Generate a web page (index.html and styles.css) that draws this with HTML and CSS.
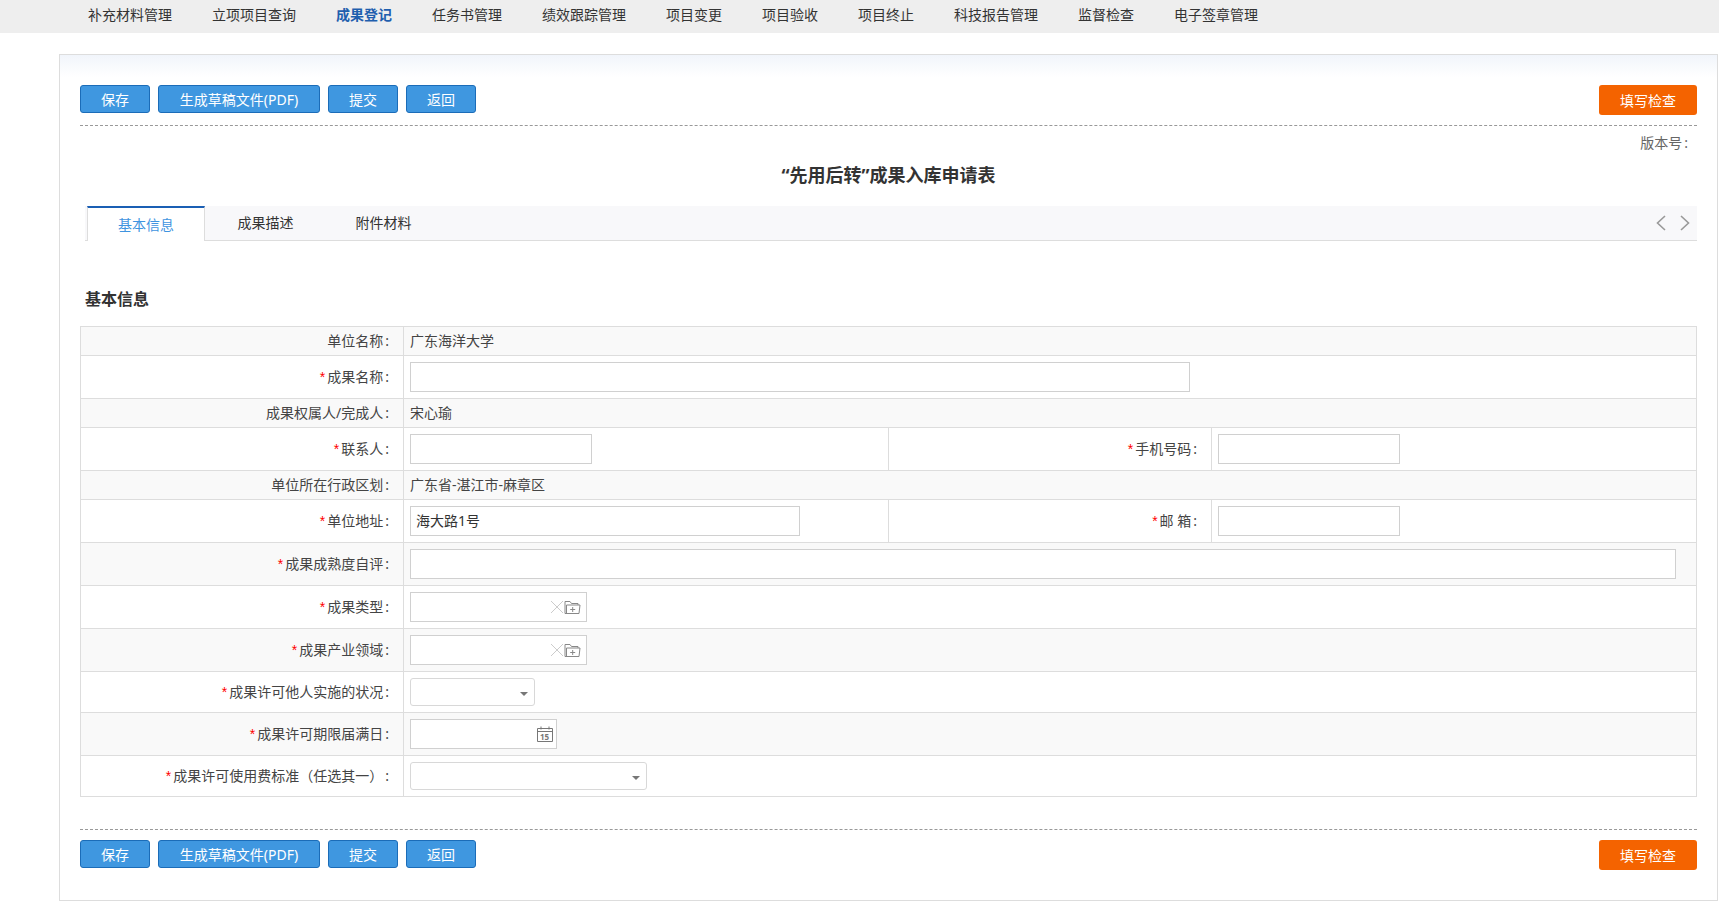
FILE: index.html
```html
<!DOCTYPE html>
<html lang="zh-CN">
<head>
  <meta charset="UTF-8">
  <title>成果入库申请表</title>
  <link rel="stylesheet" href="styles.css">
</head>
<body>
  <nav class="topnav">
    <a>补充材料管理</a>
    <a>立项项目查询</a>
    <a class="current">成果登记</a>
    <a>任务书管理</a>
    <a>绩效跟踪管理</a>
    <a>项目变更</a>
    <a>项目验收</a>
    <a>项目终止</a>
    <a>科技报告管理</a>
    <a>监督检查</a>
    <a>电子签章管理</a>
  </nav>

  <div class="panel">
    <div class="toolbar">
      <div class="btn-group">
        <button class="btn">保存</button>
        <button class="btn btn-wide">生成草稿文件(PDF)</button>
        <button class="btn">提交</button>
        <button class="btn">返回</button>
      </div>
      <button class="btn-check">填写检查</button>
    </div>

    <div class="version">版本号<span class="colon">:</span></div>
    <h1 class="form-title">“先用后转”成果入库申请表</h1>

    <div class="tabs">
      <a class="tab active">基本信息</a>
      <a class="tab">成果描述</a>
      <a class="tab">附件材料</a>
      <div class="tab-arrows">
        <svg width="12" height="16" viewBox="0 0 12 16"><path d="M10 1 L2.5 8 L10 15" /></svg>
        <svg width="12" height="16" viewBox="0 0 12 16"><path d="M2 1 L9.5 8 L2 15" /></svg>
      </div>
    </div>

    <h2 class="section-title">基本信息</h2>

    <table class="form-table">
      <colgroup>
        <col class="col-label"><col class="col-value"><col class="col-label"><col class="col-value">
      </colgroup>
      <tr class="row-s gray">
        <td class="label">单位名称<span class="colon">:</span></td>
        <td class="plain" colspan="3">广东海洋大学</td>
      </tr>
      <tr class="row-m">
        <td class="label"><i>*</i>成果名称<span class="colon">:</span></td>
        <td colspan="3"><input class="w-780" type="text"></td>
      </tr>
      <tr class="row-s gray">
        <td class="label">成果权属人/完成人<span class="colon">:</span></td>
        <td class="plain" colspan="3">宋心瑜</td>
      </tr>
      <tr class="row-m">
        <td class="label"><i>*</i>联系人<span class="colon">:</span></td>
        <td><input class="w-182" type="text"></td>
        <td class="label"><i>*</i>手机号码<span class="colon">:</span></td>
        <td><input class="w-182" type="text"></td>
      </tr>
      <tr class="row-s gray">
        <td class="label">单位所在行政区划<span class="colon">:</span></td>
        <td class="plain" colspan="3">广东省-湛江市-麻章区</td>
      </tr>
      <tr class="row-m">
        <td class="label"><i>*</i>单位地址<span class="colon">:</span></td>
        <td><input class="w-390" type="text" value="海大路1号"></td>
        <td class="label"><i>*</i>邮 箱<span class="colon">:</span></td>
        <td><input class="w-182" type="text"></td>
      </tr>
      <tr class="row-m gray">
        <td class="label"><i>*</i>成果成熟度自评<span class="colon">:</span></td>
        <td colspan="3"><input class="w-1266" type="text"></td>
      </tr>
      <tr class="row-m">
        <td class="label"><i>*</i>成果类型<span class="colon">:</span></td>
        <td colspan="3">
          <div class="picker">
            <input type="text">
            <svg class="ico-clear" width="14" height="14" viewBox="0 0 14 14"><path d="M1 1 L13 13 M13 1 L1 13" /></svg>
            <svg class="ico-folder" width="17" height="15" viewBox="0 0 17 15"><path d="M1 13.5 V1.5 H6 L7.5 3.5 H14 V5 M1 13.5 H15 L16 5 H2.5 V13.5 M8.7 7 V12 M6.2 9.5 H11.2" /></svg>
          </div>
        </td>
      </tr>
      <tr class="row-m gray">
        <td class="label"><i>*</i>成果产业领域<span class="colon">:</span></td>
        <td colspan="3">
          <div class="picker">
            <input type="text">
            <svg class="ico-clear" width="14" height="14" viewBox="0 0 14 14"><path d="M1 1 L13 13 M13 1 L1 13" /></svg>
            <svg class="ico-folder" width="17" height="15" viewBox="0 0 17 15"><path d="M1 13.5 V1.5 H6 L7.5 3.5 H14 V5 M1 13.5 H15 L16 5 H2.5 V13.5 M8.7 7 V12 M6.2 9.5 H11.2" /></svg>
          </div>
        </td>
      </tr>
      <tr class="row-l">
        <td class="label"><i>*</i>成果许可他人实施的状况<span class="colon">:</span></td>
        <td colspan="3"><div class="select w-125"></div></td>
      </tr>
      <tr class="row-m gray">
        <td class="label"><i>*</i>成果许可期限届满日<span class="colon">:</span></td>
        <td colspan="3">
          <div class="picker picker-date">
            <input type="text">
            <span class="ico-date"><svg width="16" height="16" viewBox="0 0 16 16"><path d="M0.5 2.5 H15.5 V15.5 H0.5 Z M0.5 5.5 H15.5 M4 0.5 V3.5 M12 0.5 V3.5" /></svg><b>15</b></span>
          </div>
        </td>
      </tr>
      <tr class="row-l">
        <td class="label"><i>*</i>成果许可使用费标准（任选其一）<span class="colon">:</span></td>
        <td colspan="3"><div class="select w-237"></div></td>
      </tr>
    </table>

    <div class="toolbar toolbar-bottom">
      <div class="btn-group">
        <button class="btn">保存</button>
        <button class="btn btn-wide">生成草稿文件(PDF)</button>
        <button class="btn">提交</button>
        <button class="btn">返回</button>
      </div>
      <button class="btn-check">填写检查</button>
    </div>
  </div>
</body>
</html>
```

FILE: styles.css
```css
* {
  box-sizing: border-box;
}

body {
  margin: 0;
  background-color: white;
  color: #333;
  font-family: "Noto Sans", "Noto Sans CJK SC", sans-serif;
  font-size: 14px;
}

.topnav {
  display: flex;
  gap: 40px;
  height: 33px;
  padding: 0 0 4px 88px;
  align-items: center;
  background-color: #eee;
  line-height: 29px;
}

.topnav a {
  color: #333;
}

.topnav .current {
  color: #1f5fae;
  font-weight: bold;
}

.panel {
  height: 847px;
  margin: 21px 1px 0 59px;
  padding: 30px 20px 0;
  border: 1px solid #ddd;
  background: linear-gradient(#f1f5fb, white 22px);
}

.toolbar {
  display: flex;
  justify-content: space-between;
  align-items: flex-start;
  height: 41px;
  border-bottom: 1px dashed #999;
}

.toolbar-bottom {
  height: auto;
  margin-top: 32px;
  padding-top: 10px;
  border-top: 1px dashed #999;
  border-bottom: none;
}

.btn-group {
  display: flex;
  gap: 8px;
}

.btn {
  width: 70px;
  height: 28px;
  padding: 0;
  border: 1px solid #1b6cb8;
  border-radius: 3px;
  background-color: #3f97e0;
  color: white;
  font: inherit;
}

.btn-wide {
  width: 162px;
}

.btn-check {
  width: 98px;
  height: 30px;
  padding: 0;
  border: none;
  border-radius: 3px;
  background-color: #f46300;
  color: white;
  font: inherit;
}

.colon {
  margin-left: 2px;
}

.version {
  height: 33px;
  padding-right: 9px;
  color: #666;
  line-height: 34px;
  text-align: right;
}

.form-title {
  height: 47px;
  margin: 0;
  color: #333;
  font-size: 18px;
  font-weight: bold;
  line-height: 32px;
  text-align: center;
}

.tabs {
  display: flex;
  align-items: stretch;
  height: 35px;
  margin-left: 5px;
  padding-left: 2px;
  border-bottom: 1px solid #ddd;
  background-color: #f8f8fa;
}

.tab {
  width: 118px;
  padding-left: 3px;
  text-align: center;
  line-height: 33px;
}

.tab.active {
  width: 118px;
  height: 35px;
  padding-left: 0;
  border: 1px solid #ddd;
  border-top: 2px solid #1a5fb4;
  border-bottom: none;
  background-color: white;
  color: #3f94e0;
  line-height: 34px;
}

.tab-arrows {
  display: flex;
  gap: 12px;
  align-items: center;
  margin-left: auto;
  padding-right: 6px;
  padding-bottom: 1px;
}

.tab-arrows path {
  fill: none;
  stroke: #999;
  stroke-width: 1.6;
}

.section-title {
  height: 85px;
  margin: 0;
  padding: 46px 0 0 5px;
  color: #333;
  font-size: 16px;
  font-weight: bold;
  line-height: 24px;
}

.form-table {
  width: 1616px;
  border-collapse: collapse;
  table-layout: fixed;
  color: #444;
}

.col-label {
  width: 323px;
}

.col-value {
  width: 485px;
}

.form-table td {
  padding: 0 0 0 6px;
  border: 1px solid #ddd;
}

.form-table td.label {
  padding: 0 14px 2px 0;
  text-align: right;
}

.form-table td.plain {
  padding-bottom: 2px;
}

.label i {
  margin-right: 2px;
  color: #f00;
  font-family: "Liberation Sans", sans-serif;
  font-size: 14px;
  font-style: normal;
}

.row-s td {
  height: 29px;
}

.row-m td {
  height: 43px;
}

.row-l td {
  height: 41px;
}

.gray {
  background-color: #f9f9f9;
}

input {
  display: block;
  height: 30px;
  padding: 0 5px 2px;
  border: 1px solid #d0d0d0;
  background-color: white;
  color: #333;
  font: inherit;
}

.w-182 { width: 182px; }
.w-390 { width: 390px; }
.w-780 { width: 780px; }
.w-1266 { width: 1266px; }
.w-125 { width: 125px; }
.w-237 { width: 237px; }

.picker {
  display: flex;
  align-items: center;
  width: 177px;
  height: 30px;
  border: 1px solid #d0d0d0;
  background-color: white;
}

.picker input {
  flex: 1;
  width: 0;
  height: 28px;
  border: none;
}

.picker-date {
  width: 147px;
}

.ico-folder {
  margin-right: 5px;
}

.ico-clear path {
  fill: none;
  stroke: #ccc;
  stroke-width: 1;
}

.ico-folder path {
  fill: none;
  stroke: #888;
  stroke-width: 1;
}

.ico-date {
  position: relative;
  width: 16px;
  height: 16px;
  margin-right: 3px;
}

.ico-date svg {
  display: block;
}

.ico-date path {
  fill: none;
  stroke: #777;
  stroke-width: 1;
}

.ico-date b {
  position: absolute;
  left: 3px;
  top: 6px;
  color: #777;
  font-size: 8px;
  font-weight: bold;
  line-height: 9px;
}

.select {
  position: relative;
  height: 28px;
  border: 1px solid #d8d8d8;
  border-radius: 3px;
  background-color: white;
}

.select::after {
  content: "";
  position: absolute;
  right: 6px;
  top: 13px;
  border-top: 4px solid #777;
  border-left: 4px solid transparent;
  border-right: 4px solid transparent;
}
```
